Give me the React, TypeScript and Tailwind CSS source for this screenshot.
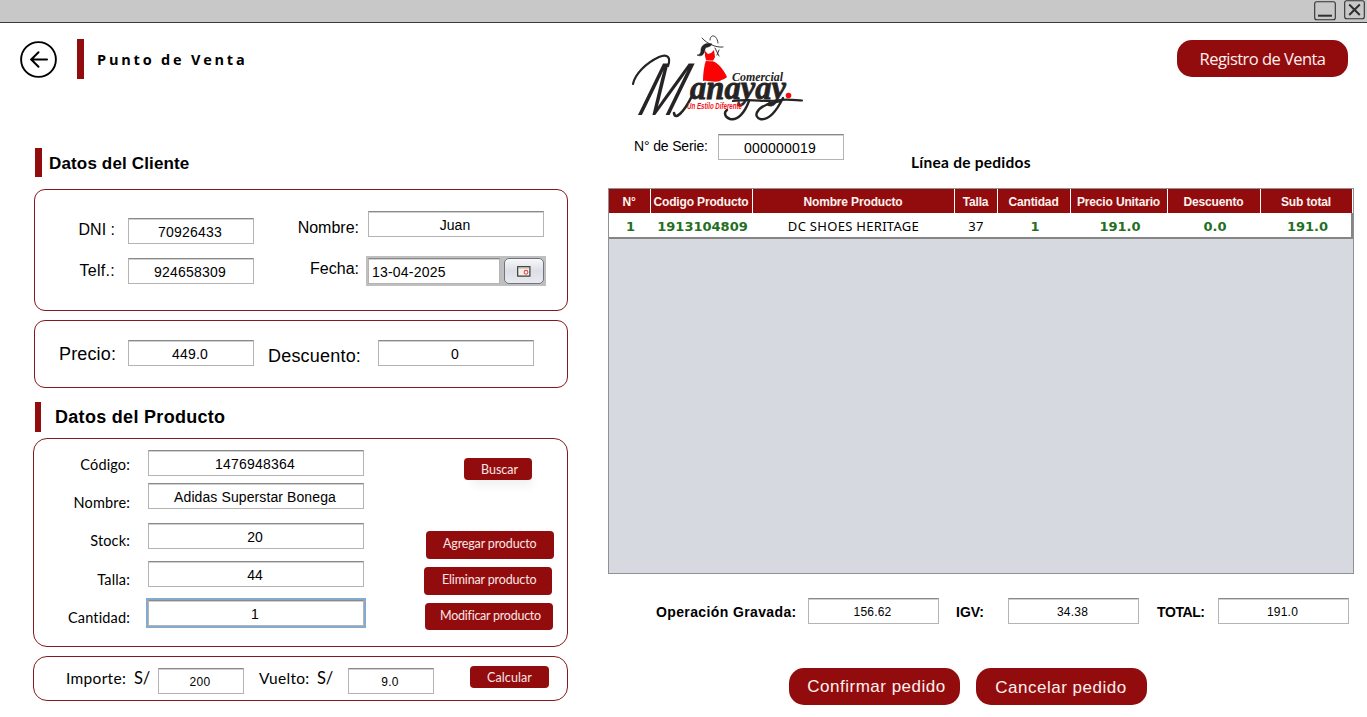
import type { ReactNode } from "react";

const ARIAL = "font-['Liberation_Sans',Arial,sans-serif]";
const LATO = "font-['Lato',Calibri,sans-serif] [font-variant-ligatures:none]";

function Field({ className = "", children }: { className?: string; children: ReactNode }) {
  return (
    <div
      className={`${ARIAL} flex h-[26px] shrink-0 items-center justify-center whitespace-nowrap border border-[#b4b4b4] border-t-[#8a8a8a] bg-white pr-[2px] pt-[2px] text-black shadow-[inset_0_1px_0_#d0d0d0] ${className}`}
    >
      {children}
    </div>
  );
}

function Label({ className = "", children }: { className?: string; children: ReactNode }) {
  return <div className={`shrink-0 whitespace-nowrap text-black ${className}`}>{children}</div>;
}

function Panel({ className = "", children }: { className?: string; children: ReactNode }) {
  return <section className={`flex border border-[#84181b] ${className}`}>{children}</section>;
}

function SmallButton({ className = "", children }: { className?: string; children: ReactNode }) {
  return (
    <button
      className={`${LATO} block shrink-0 whitespace-nowrap rounded-[4px] bg-[#920c0e] text-left text-[12.5px] text-[#fbe6e4] ${className}`}
    >
      {children}
    </button>
  );
}

function Logo() {
  return (
    <svg className="ml-[20px] mt-[9px] shrink-0 overflow-visible" width="180" height="94" viewBox="628 32 180 94" fill="none">
      <g stroke="#262324" strokeLinecap="round" strokeLinejoin="round">
        <path d="M633 84 C635 74 646 63 659 57 C668 53 671 58 668 66" strokeWidth="2.2" />
        <path d="M674 113 C675 121 684 112 692 96" strokeWidth="2.6" />
        <path d="M733 101 C755 98 765 103 780 100 C788 99 794 100 802 100.5" strokeWidth="2.2" />
        <path d="M749 101 C745 112 738 121 730 119 C724 117 724 112 727 110" strokeWidth="2.4" />
        <path d="M783 98 C777 110 769 121 760 119 C753 116 757 109 766 105 C770 103 776 102 780 101" strokeWidth="2.4" />
      </g>
      <g fill="#262324" fontStyle="italic">
        <text transform="translate(636.5 115) skewX(-20) scale(0.63 1)" fontSize="75" fontFamily="'Liberation Sans', sans-serif">M</text>
        <text x="690" y="98.5" fontSize="34" fontWeight="700" stroke="#262324" strokeWidth="0.8" fontFamily="'Liberation Serif', serif" textLength="96" lengthAdjust="spacingAndGlyphs">anayay</text>
        <text x="732" y="80.5" fontSize="12.5" fontWeight="700" fontFamily="'Liberation Serif', serif" textLength="51" lengthAdjust="spacingAndGlyphs">Comercial</text>
      </g>
      <text x="687" y="108.5" fill="#f01418" fontFamily="'Liberation Sans', sans-serif" fontStyle="italic" fontWeight="700" fontSize="8.5" textLength="55" lengthAdjust="spacingAndGlyphs">Un Estilo Diferente</text>
      <circle cx="788.5" cy="95.5" r="2.8" fill="#f80808" />
      <path d="M705 51 L708 54 L711 53 L714 50 L715 57 L713 61 C719 64 724 70 727 77 C724 80 722 79 720 81 C714 83 708 80 703 81 C703 74 704 66 706 60 L705 56 Z" fill="#fb0204" />
      <path d="M712 44 C705 42 701 46 701 50 C701 54 699 55 697 55 C703 58 705 52 705 49 C706 46 710 48 712 44Z" fill="#262324" stroke="#262324" strokeWidth="0.6" />
      <g stroke="#262324" strokeLinecap="round">
        <path d="M702 38 C707 44 717 48 723 47 M710 40 C710 34 717 34 718 43 M715 48 L719 56 M719 50 L717 55" strokeWidth="0.9" />
        <path d="M705 60.5 L714 61" stroke="#fff" strokeWidth="0.7" />
      </g>
    </svg>
  );
}

const columns = [
  { title: "N°", width: "w-[42px]", value: "1", bold: true },
  { title: "Codigo Producto", width: "w-[102px]", value: "1913104809", bold: true },
  { title: "Nombre Producto", width: "w-[202px]", value: "DC SHOES HERITAGE", bold: false },
  { title: "Talla", width: "w-[43px]", value: "37", bold: false },
  { title: "Cantidad", width: "w-[73px]", value: "1", bold: true },
  { title: "Precio Unitario", width: "w-[97px]", value: "191.0", bold: true },
  { title: "Descuento", width: "w-[93px]", value: "0.0", bold: true },
  { title: "Sub total", width: "w-[92px]", value: "191.0", bold: true },
];

function OrderTable() {
  return (
    <div className="h-[386px] w-[746px] border border-[#8e9297] bg-[#d6d9e0]">
      <div className={`${ARIAL} flex h-[24px] bg-white text-[12px] font-bold text-[#fff2ee]`}>
        {columns.map((c) => (
          <div
            key={c.title}
            className={`${c.width} flex shrink-0 items-center justify-center whitespace-nowrap border-r border-white bg-[#920c0e] pr-[1px] pt-[2px] tracking-[-0.15px]`}
          >
            {c.title}
          </div>
        ))}
      </div>
      <div className="flex h-[26px] w-[744px] border-b-2 border-r-2 border-[#858585] bg-white">
        {columns.map((c) => (
          <div
            key={c.title}
            className={`${c.width} flex shrink-0 items-center justify-center whitespace-nowrap pt-[3px] text-[13px] ${
              c.bold
                ? "pl-[1px] font-['DejaVu_Sans',Verdana,sans-serif] font-bold text-[#1f701f]"
                : "pr-[1px] font-['Noto_Sans',Tahoma,sans-serif] tracking-[0.3px] text-black"
            }`}
          >
            {c.value}
          </div>
        ))}
      </div>
    </div>
  );
}

function LeftColumn() {
  const prod = `${LATO} w-[96px] text-right text-[14.5px] tracking-[0.15px]`;
  const row = "flex h-[26px] items-start";
  const pf = "ml-[18px] w-[216px] text-[14px]";
  return (
    <div className="w-[608px] shrink-0">
      <div className="flex h-[125px] items-start">
        <svg className="ml-[20px] mt-[18px] shrink-0" width="37" height="37" viewBox="0 0 37 37" fill="none" stroke="#000" strokeLinecap="round">
          <circle cx="18.5" cy="18.5" r="17.4" strokeWidth="1.9" />
          <path d="M11.5 18.5H27M18.5 11.3L11.2 18.5L18.5 25.7" strokeWidth="2" />
        </svg>
        <div className="ml-[20px] mt-[16px] h-[40px] w-[7px] bg-[#920c0e]" />
        <Label className="ml-[13px] mt-[26px] font-['Open_Sans',sans-serif] text-[14.5px] font-bold leading-[22px] tracking-[2.8px]">
          Punto de Venta
        </Label>
      </div>
      <div className="ml-[35px] flex h-[41px] items-start">
        <div className="h-[29px] w-[7px] bg-[#920c0e]" />
        <Label className={`${ARIAL} ml-[7px] text-[17px] font-bold leading-[31px] tracking-[0.15px]`}>Datos del Cliente</Label>
      </div>
      <Panel className="ml-[34px] h-[122px] w-[534px] rounded-[11px]">
        <div className={`${ARIAL} flex w-[219px] flex-col gap-[14px] pt-[28px] text-[14px] tracking-[0.2px]`}>
          <div className={row}>
            <Label className="w-[80px] text-right text-[16px] leading-[24px] tracking-normal">DNI :</Label>
            <Field className="ml-[13px] w-[126px]">70926433</Field>
          </div>
          <div className={row}>
            <Label className="w-[80px] text-right text-[16px] leading-[25px] tracking-[0.3px]">Telf.:</Label>
            <Field className="ml-[13px] w-[126px]">924658309</Field>
          </div>
        </div>
        <div className={`${ARIAL} flex flex-col gap-[19px] pt-[21px] text-[14px]`}>
          <div className={row}>
            <Label className="w-[105px] text-right text-[16px] leading-[33px]">Nombre:</Label>
            <Field className="ml-[9px] w-[176px]">Juan</Field>
          </div>
          <div className="flex h-[30px] items-start">
            <Label className="w-[105px] text-right text-[16px] leading-[25px]">Fecha:</Label>
            <div className="ml-[7px] flex h-[30px] w-[180px] items-center gap-[4px] bg-[#bfbfbf] px-[2px]">
              <Field className="w-[132px] justify-start pl-[3px] tracking-[0.2px]">13-04-2025</Field>
              <button className="flex h-[26px] w-[40px] items-center justify-center rounded-[5px] border border-[#6f7480] bg-linear-to-b from-[#f8f8fa] via-[#dcdfe5] to-[#e8eaf0]">
                <svg width="14" height="11" viewBox="0 0 14 11" fill="none">
                  <rect x="0.7" y="0.7" width="12.2" height="9.4" fill="#f6f1e8" stroke="#35373d" strokeWidth="1.2" />
                  <path d="M1.3 2H12.3" stroke="#b9a999" strokeWidth="1" />
                  <circle cx="9" cy="6.3" r="1.9" stroke="#e05050" strokeWidth="1.1" />
                </svg>
              </button>
            </div>
          </div>
        </div>
      </Panel>
      <Panel className={`${ARIAL} ml-[34px] mt-[9px] h-[68px] w-[534px] items-start rounded-[11px] pt-[19px] text-[14px]`}>
        <Label className="ml-[24px] w-[69px] text-[18px] leading-[28px] tracking-[0.15px]">Precio:</Label>
        <Field className="w-[126px] tracking-[0.2px]">449.0</Field>
        <Label className="ml-[14px] w-[110px] text-[18px] leading-[32px] tracking-[0.2px]">Descuento:</Label>
        <Field className="w-[156px]">0</Field>
      </Panel>
      <div className="ml-[35px] mt-[14px] flex h-[36px] items-start">
        <div className="h-[30px] w-[6px] bg-[#920c0e]" />
        <Label className={`${ARIAL} ml-[14px] text-[18px] font-bold leading-[30px] tracking-[0.3px]`}>Datos del Producto</Label>
      </div>
      <Panel className="ml-[33px] h-[209px] w-[535px] rounded-[14px]">
        <div className="w-[330px] shrink-0 pt-[11px]">
          <div className={row}>
            <Label className={`${prod} leading-[29px]`}>Código:</Label>
            <Field className={`${pf} tracking-[0.2px]`}>1476948364</Field>
          </div>
          <div className={`${row} mt-[7px]`}>
            <Label className={`${prod} leading-[40px]`}>Nombre:</Label>
            <Field className={`${pf} tracking-[0.1px]`}>Adidas Superstar Bonega</Field>
          </div>
          <div className={`${row} mt-[14px]`}>
            <Label className={`${prod} leading-[36px]`}>Stock:</Label>
            <Field className={pf}>20</Field>
          </div>
          <div className={`${row} mt-[12px]`}>
            <Label className={`${prod} leading-[38px]`}>Talla:</Label>
            <Field className={pf}>44</Field>
          </div>
          <div className={`${row} mt-[13px]`}>
            <Label className={`${prod} leading-[36px]`}>Cantidad:</Label>
            <Field className={`${pf} outline-2 outline-[#86aace]`}>1</Field>
          </div>
        </div>
        <div className="flex flex-col items-start pt-[19px]">
          <SmallButton className="ml-[100px] h-[22px] w-[68px] pl-[17px] leading-[21px] shadow-[4px_10px_10px_-4px_rgba(0,0,0,0.06)]">Buscar</SmallButton>
          <SmallButton className="ml-[62px] mt-[51px] h-[28px] w-[128px] pb-[3px] pl-[17px] leading-[25px] tracking-[-0.15px]">Agregar producto</SmallButton>
          <SmallButton className="ml-[60px] mt-[8px] h-[28px] w-[128px] pb-[3px] pl-[18px] leading-[25px] tracking-[-0.15px]">Eliminar producto</SmallButton>
          <SmallButton className="ml-[61px] mt-[8px] h-[27px] w-[128px] pb-[2px] pl-[15px] leading-[25px] tracking-[-0.25px]">Modificar producto</SmallButton>
        </div>
      </Panel>
      <Panel className={`${LATO} ml-[33px] mt-[9px] h-[45px] w-[535px] items-start rounded-[14px] pt-[9px] text-[15.5px]`}>
        <Label className="ml-[32px] w-[68px] leading-[25px] tracking-[0.3px]">Importe:</Label>
        <Label className="mt-[2px] w-[24px] text-[16.5px] leading-[20px] tracking-[-0.3px]">S/</Label>
        <Field className="mt-[2px] w-[86px] text-[12px] tracking-[0.3px]">200</Field>
        <Label className="ml-[15px] w-[58px] leading-[25px] tracking-[0.3px]">Vuelto:</Label>
        <Label className="mt-[2px] w-[31px] text-[16.5px] leading-[20px] tracking-[-0.3px]">S/</Label>
        <Field className="mt-[2px] w-[86px] text-[12px] tracking-[0.3px]">9.0</Field>
        <SmallButton className="ml-[36px] h-[22px] w-[79px] pl-[17px] leading-[23px] tracking-[0.1px]">Calcular</SmallButton>
      </Panel>
    </div>
  );
}

function RightColumn() {
  const total = "w-[131px] pr-0 text-[12px] tracking-[0.2px]";
  const big = `${ARIAL} h-[37px] w-[171px] rounded-[15px] bg-[#920c0e] text-[17px] tracking-[0.5px] text-[#fff0ee]`;
  return (
    <div className="w-[759px] shrink-0">
      <div className="flex h-[111px] items-start">
        <Logo />
        <button className="ml-[369px] mt-[17px] h-[37px] w-[171px] whitespace-nowrap rounded-[15px] bg-[#920c0e] font-['Open_Sans',sans-serif] text-[16.5px] leading-[37px] tracking-[-0.55px] text-[#fff0ee]">
          Registro de Venta
        </button>
      </div>
      <div className="flex h-[54px] items-start">
        <Label className={`${ARIAL} ml-[26px] w-[84px] text-[14px] leading-[24px] tracking-[-0.15px]`}>N° de Serie:</Label>
        <Field className="w-[126px] text-[14px] tracking-[0.2px]">000000019</Field>
        <Label className={`${LATO} ml-[67px] mt-[17px] text-[15.5px] font-bold leading-[22px] tracking-[0.25px]`}>Línea de pedidos</Label>
      </div>
      <OrderTable />
      <div className={`${ARIAL} mt-[24px] flex h-[26px] items-start text-[14px] font-bold leading-[28px]`}>
        <Label className="ml-[48px] w-[152px] tracking-[0.38px]">Operación Gravada:</Label>
        <Field className={`${total} font-normal`}>156.62</Field>
        <Label className="ml-[17px] w-[52px]">IGV:</Label>
        <Field className={`${total} font-normal`}>34.38</Field>
        <Label className="ml-[18px] w-[61px] tracking-[-0.4px]">TOTAL:</Label>
        <Field className={`${total} font-normal`}>191.0</Field>
      </div>
      <div className="ml-[181px] mt-[44px] flex gap-[16px]">
        <button className={`${big} pl-[4px]`}>Confirmar pedido</button>
        <button className={`${big} pr-[1px] pt-[2px]`}>Cancelar pedido</button>
      </div>
    </div>
  );
}

export default function App() {
  return (
    <main className="h-[717px] w-[1367px] overflow-hidden bg-white">
      <header className="flex h-[23px] items-start justify-end gap-[8px] border-b border-[#3c3c3c] bg-[#c8c8c8] pr-[2px]">
        <svg className="mt-px" width="22" height="20" viewBox="0 0 22 20" fill="none" stroke="#303030">
          <rect x="0.7" y="0.7" width="20.6" height="18" rx="2" strokeWidth="1.1" />
          <path d="M4 14.7H18" strokeWidth="2" />
        </svg>
        <svg width="21" height="20" viewBox="0 0 21 20" fill="none" stroke="#303030">
          <rect x="0.7" y="0.7" width="19.6" height="18" rx="2" strokeWidth="1.1" />
          <path d="M5.2 4.5L15.8 15M15.8 4.5L5.2 15" strokeWidth="2" />
        </svg>
      </header>
      <div className="flex">
        <LeftColumn />
        <RightColumn />
      </div>
    </main>
  );
}
